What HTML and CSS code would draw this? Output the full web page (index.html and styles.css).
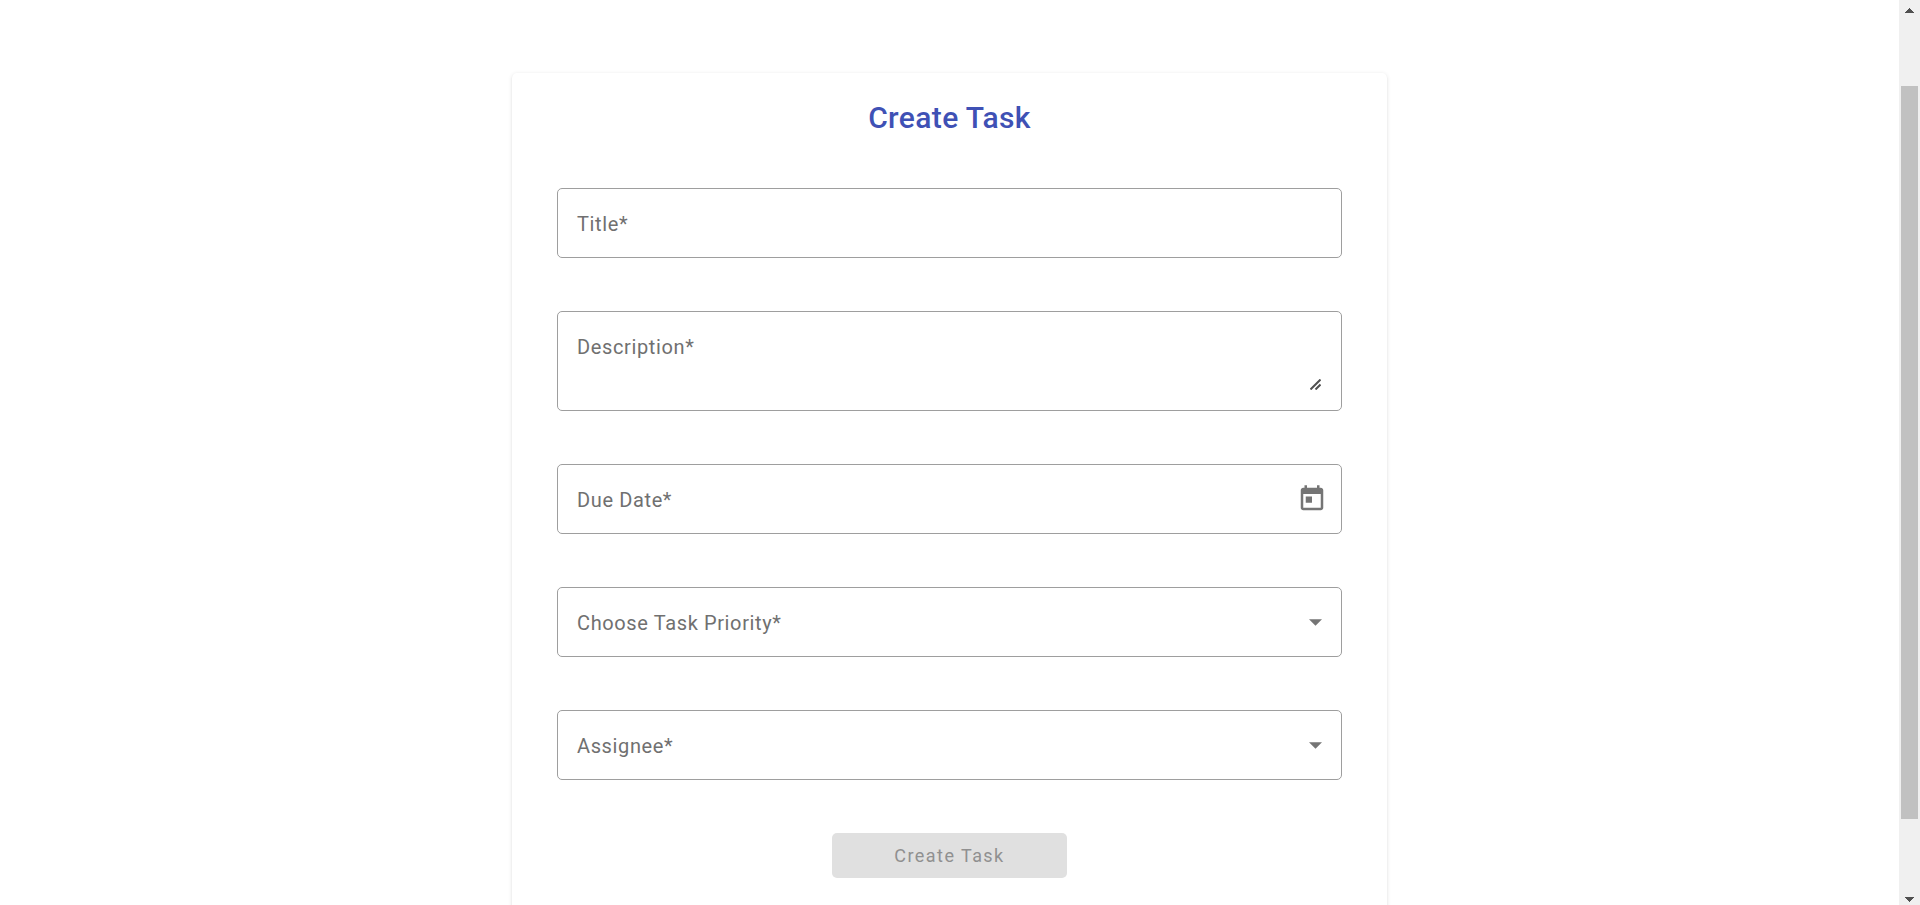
FILE: index.html
```html
<!DOCTYPE html>
<html lang="en">
<head>
  <meta charset="utf-8">
  <meta name="viewport" content="width=device-width, initial-scale=1">
  <title>Create Task</title>
  <link rel="stylesheet" href="styles.css">
</head>
<body>
  <main class="page">
    <form class="card">
      <h1 class="card-title">Create Task</h1>

      <div class="field">
        <label class="field-label" for="title">Title*</label>
        <input class="field-control" id="title" type="text" required>
      </div>

      <div class="field">
        <label class="field-label" for="description">Description*</label>
        <textarea class="field-control field-area" id="description" required></textarea>
        <svg class="resize-grip" viewBox="0 0 11 11" aria-hidden="true"><path d="M.5 10.5l10-10M5.5 10.5l5-5"/></svg>
      </div>

      <div class="field">
        <label class="field-label" for="due">Due Date*</label>
        <input class="field-control" id="due" type="text" required>
        <button class="date-button" type="button" aria-label="Open calendar">
          <svg class="date-icon" viewBox="0 0 24 24" aria-hidden="true"><path d="M19 3h-1V1h-2v2H8V1H6v2H5c-1.11 0-1.99.9-1.99 2L3 19c0 1.1.89 2 2 2h14c1.1 0 2-.9 2-2V5c0-1.1-.9-2-2-2zm0 16H5V8h14v11zM7 10h5v5H7z"/></svg>
        </button>
      </div>

      <div class="field">
        <label class="field-label" for="priority">Choose Task Priority*</label>
        <select class="field-control" id="priority" required><option value=""></option></select>
        <svg class="select-arrow" viewBox="0 0 10 5" aria-hidden="true"><path d="M0 0h10L5 5z"/></svg>
      </div>

      <div class="field">
        <label class="field-label" for="assignee">Assignee*</label>
        <select class="field-control" id="assignee" required><option value=""></option></select>
        <svg class="select-arrow" viewBox="0 0 10 5" aria-hidden="true"><path d="M0 0h10L5 5z"/></svg>
      </div>

      <button class="submit" type="submit" disabled>Create Task</button>
    </form>
  </main>

  <div class="scrollbar" aria-hidden="true">
    <svg class="scroll-arrow" viewBox="0 0 9 5"><path d="M4 0h1v1h1v1h1v1h1v1h1v1H0V4h1V3h1V2h1V1h1z"/></svg>
    <div class="scroll-track"><div class="scroll-thumb"></div></div>
    <svg class="scroll-arrow" viewBox="0 0 9 5"><path d="M0 0h9v1H8v1H7v1H6v1H5v1H4V4H3V3H2V2H1V1H0z"/></svg>
  </div>
</body>
</html>
```
FILE: styles.css
```css
* {
  box-sizing: border-box;
}

body {
  display: flex;
  height: 100vh;
  margin: 0;
  overflow: hidden;
  background: #fff;
  font-family: Roboto, "Liberation Sans", sans-serif;
}

.page {
  flex: 1;
  display: flex;
  align-items: flex-start;
  justify-content: center;
  padding-top: 73px;
}

.card {
  display: flex;
  flex-direction: column;
  gap: 53px;
  width: 60%;
  max-width: 875px;
  padding: 25px 45px 53px;
  border-radius: 5px;
  background: #fff;
  box-shadow: 0 1px 1px rgba(0, 0, 0, 0.1), 0 1px 4px rgba(0, 0, 0, 0.12);
}

.card-title {
  margin: 0 0 -3px;
  color: #3f51b5;
  font-size: 30px;
  font-weight: 500;
  line-height: 40px;
  letter-spacing: 0.0125em;
  text-align: center;
}

.field {
  display: grid;
  grid-template-columns: minmax(0, 1fr) auto;
  align-items: center;
  min-height: 70px;
  padding: 0 19px;
  border: 1px solid #9e9e9e;
  border-radius: 5px;
}

.field-label,
.field-control {
  grid-row: 1;
  grid-column: 1 / -1;
}

.field-label {
  align-self: start;
  z-index: 1;
  margin-top: 20px;
  color: #707070;
  font-size: 20px;
  line-height: 30px;
  letter-spacing: 0.03125em;
  pointer-events: none;
}

.field-control {
  width: 100%;
  height: 30px;
  margin: 19px 0;
  padding: 0;
  border: 0;
  outline: 0;
  appearance: none;
  background: transparent;
  color: rgba(0, 0, 0, 0.87);
  font: inherit;
  font-size: 20px;
}

.field-area {
  display: block;
  height: 60px;
  resize: vertical;
}

.field-area::-webkit-resizer {
  background: transparent;
}

.resize-grip {
  grid-row: 1;
  grid-column: 2;
  align-self: end;
  width: 11px;
  height: 11px;
  margin: 0 1px 20px;
  fill: none;
  stroke: #505050;
  stroke-width: 2;
  pointer-events: none;
}

.date-button {
  grid-row: 1;
  grid-column: 2;
  z-index: 1;
  display: flex;
  margin-right: -5px;
  padding: 0;
  border: 0;
  background: transparent;
}

.date-icon {
  width: 30px;
  height: 30px;
  fill: #757575;
}

.select-arrow {
  grid-row: 1;
  grid-column: 2;
  width: 13px;
  height: 7px;
  fill: #757575;
  pointer-events: none;
}

.submit {
  align-self: center;
  width: 30%;
  height: 45px;
  padding: 0;
  border: 0;
  border-radius: 5px;
  background: #e0e0e0;
  color: #909090;
  font: inherit;
  font-size: 18px;
  letter-spacing: 0.08em;
}

.scrollbar {
  display: flex;
  flex: none;
  flex-direction: column;
  align-items: center;
  gap: 8px;
  width: 21px;
  padding: 8px 0 3px;
  background: #f0f0f0;
}

.scroll-arrow {
  flex: none;
  width: 9px;
  height: 5px;
  fill: #505050;
}

.scroll-track {
  flex: 1;
  width: 17px;
  padding: 65px 0 70px;
}

.scroll-thumb {
  height: 100%;
  background: #c1c1c1;
}
```
